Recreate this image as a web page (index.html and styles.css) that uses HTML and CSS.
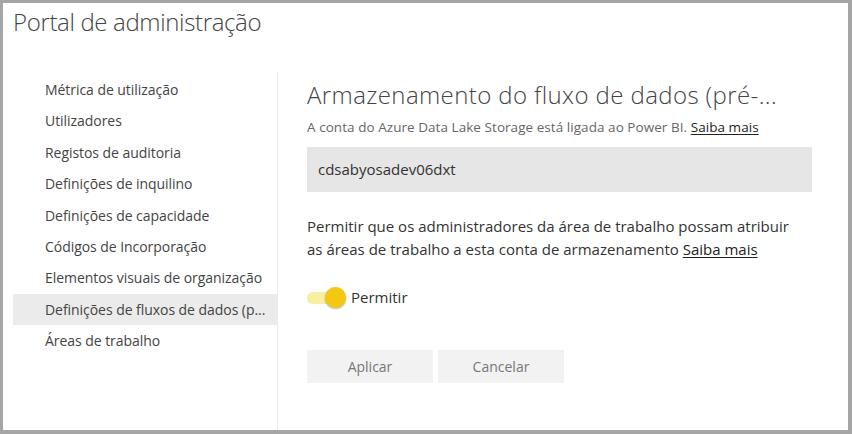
FILE: index.html
```html
<!DOCTYPE html>
<html lang="pt">
<head>
<meta charset="utf-8">
<title>Portal de administração</title>
<link rel="stylesheet" href="styles.css">
</head>
<body>
<div class="frame">
  <h1 class="title">Portal de administração</h1>
  <div class="main">
    <nav class="sidebar">
      <div class="nav-item">Métrica de utilização</div>
      <div class="nav-item">Utilizadores</div>
      <div class="nav-item">Registos de auditoria</div>
      <div class="nav-item">Definições de inquilino</div>
      <div class="nav-item">Definições de capacidade</div>
      <div class="nav-item">Códigos de Incorporação</div>
      <div class="nav-item">Elementos visuais de organização</div>
      <div class="nav-item selected">Definições de fluxos de dados (p...</div>
      <div class="nav-item">Áreas de trabalho</div>
    </nav>
    <section class="content">
      <h2 class="heading">Armazenamento do fluxo de dados (pré-...</h2>
      <p class="sub">A conta do Azure Data Lake Storage está ligada ao Power BI. <a class="link">Saiba mais</a></p>
      <div class="field">cdsabyosadev06dxt</div>
      <p class="desc">Permitir que os administradores da área de trabalho possam atribuir<br>as áreas de trabalho a esta conta de armazenamento <a class="link">Saiba mais</a></p>
      <div class="toggle-row">
        <span class="toggle"><span class="track"></span><span class="knob"></span></span>
        <span class="toggle-label">Permitir</span>
      </div>
      <div class="buttons">
        <button class="btn">Aplicar</button>
        <button class="btn">Cancelar</button>
      </div>
    </section>
  </div>
</div>
</body>
</html>
```
FILE: styles.css
```css
* { box-sizing: border-box; }
html, body { margin: 0; padding: 0; }
body {
  width: 852px;
  height: 434px;
  background: #a5a5a5;
  font-family: "Open Sans", "Noto Sans", sans-serif;
  color: #444;
}
.frame {
  width: 852px;
  height: 434px;
  border-style: solid;
  border-color: #a5a5a5;
  border-width: 3px 4px 4px 3px;
  background: #fff;
  display: flex;
  flex-direction: column;
  overflow: hidden;
}
.title {
  margin: 0;
  padding: 2px 0 0 10px;
  height: 69px;
  font-size: 24px;
  font-weight: 300;
  line-height: 33px;
  color: #444;
  letter-spacing: -0.35px;
}
.main {
  flex: 1;
  display: flex;
}
.sidebar {
  width: 265px;
  margin-left: 10px;
  padding-top: 2px;
  border-right: 1px solid #ececec;
}
.nav-item {
  height: 31.4px;
  line-height: 31.4px;
  padding-left: 32px;
  font-size: 14px;
  color: #444;
  white-space: nowrap;
  letter-spacing: -0.05px;
}
.nav-item.selected { background: #ebebeb; }
.content {
  flex: 1;
  padding-left: 29px;
  padding-top: 6px;
}
.heading {
  margin: 0;
  font-size: 24px;
  font-weight: 300;
  line-height: 33px;
  color: #444;
  letter-spacing: 0.4px;
}
.sub {
  margin: 7px 0 0;
  font-size: 13.5px;
  line-height: 18px;
  color: #666;
  letter-spacing: 0.05px;
}
.link {
  color: #222;
  text-decoration: underline;
  text-underline-offset: 2px;
}
.field {
  margin-top: 11px;
  width: 505px;
  height: 45px;
  background: #e6e6e6;
  padding-left: 11px;
  font-size: 15px;
  line-height: 45px;
  color: #333;
}
.desc {
  margin: 23px 0 0;
  font-size: 15px;
  line-height: 23px;
  color: #333;
}
.toggle-row {
  margin-top: 24px;
  display: flex;
  align-items: center;
  gap: 5px;
  height: 24px;
}
.toggle {
  position: relative;
  width: 39px;
  height: 21px;
  display: inline-block;
}
.track {
  position: absolute;
  left: 0;
  top: 5px;
  width: 32px;
  height: 12px;
  border-radius: 6px;
  background: #f7f0a0;
}
.knob {
  position: absolute;
  left: 18px;
  top: 0;
  width: 21px;
  height: 21px;
  border-radius: 50%;
  background: #f2c811;
  box-shadow: 0 1px 2px rgba(0,0,0,0.3);
}
.toggle-label {
  font-size: 15px;
  color: #333;
}
.buttons {
  margin-top: 41px;
  display: flex;
  gap: 5px;
}
.btn {
  width: 126px;
  height: 33px;
  border: none;
  background: #f2f2f2;
  font-family: inherit;
  font-size: 14px;
  color: #777;
  padding: 0;
}
```
